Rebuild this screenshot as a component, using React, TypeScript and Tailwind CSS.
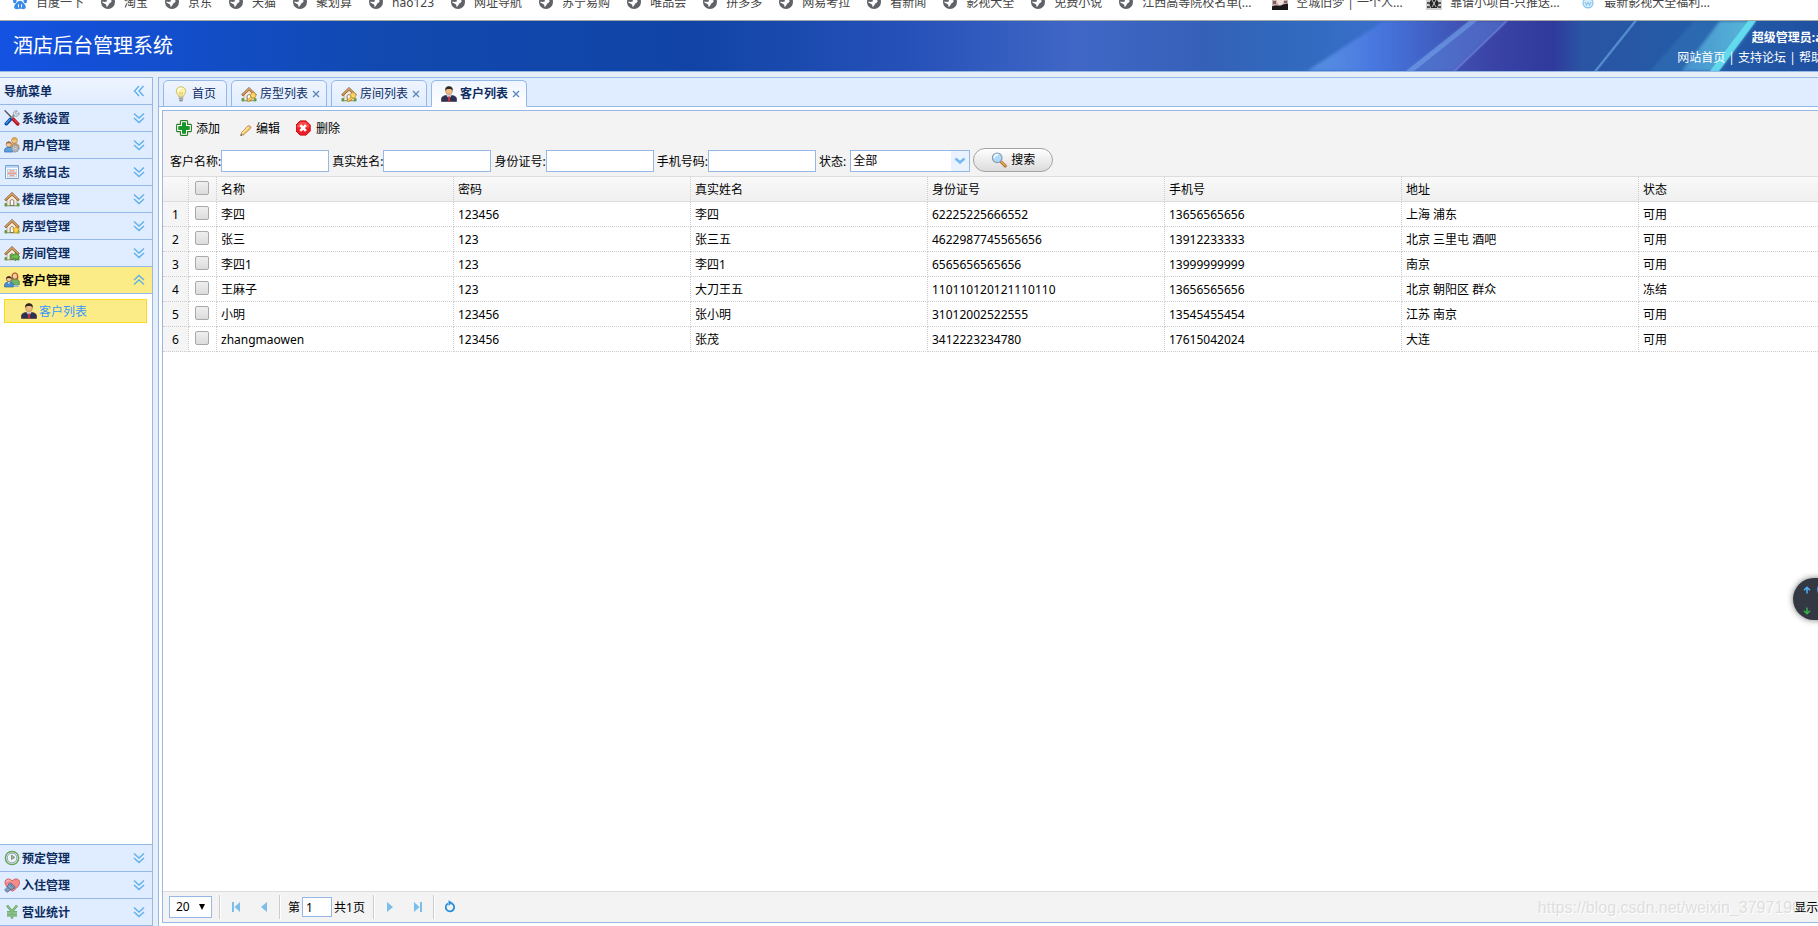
import { useState } from "react";
import type { ReactNode } from "react";

type Customer = {
  name: string;
  password: string;
  realName: string;
  idCard: string;
  mobile: string;
  address: string;
  status: string;
};

type IconName =
  | "tools"
  | "users"
  | "log"
  | "house"
  | "houseStar"
  | "houseGo"
  | "houseKey"
  | "customers"
  | "manager"
  | "clock"
  | "heart"
  | "yen"
  | "bulb"
  | "add"
  | "pencil"
  | "remove"
  | "search";

const bookmarks = [
  { label: "百度一下", icon: "baidu" },
  { label: "淘宝", icon: "globe" },
  { label: "京东", icon: "globe" },
  { label: "天猫", icon: "globe" },
  { label: "聚划算", icon: "globe" },
  { label: "hao123", icon: "globe" },
  { label: "网址导航", icon: "globe" },
  { label: "苏宁易购", icon: "globe" },
  { label: "唯品会", icon: "globe" },
  { label: "拼多多", icon: "globe" },
  { label: "网易考拉", icon: "globe" },
  { label: "看新闻", icon: "globe" },
  { label: "影视大全", icon: "globe" },
  { label: "免费小说", icon: "globe" },
  { label: "江西高等院校名单(...", icon: "globe" },
  { label: "空城旧梦 | 一个人...", icon: "photo" },
  { label: "靠谱小项目-只推送...", icon: "dark" },
  { label: "最新影视大全福利...", icon: "badge" },
];

const topMenus: { label: string; icon: IconName }[] = [
  { label: "系统设置", icon: "tools" },
  { label: "用户管理", icon: "users" },
  { label: "系统日志", icon: "log" },
  { label: "楼层管理", icon: "house" },
  { label: "房型管理", icon: "houseStar" },
  { label: "房间管理", icon: "houseGo" },
];

const bottomMenus: { label: string; icon: IconName }[] = [
  { label: "预定管理", icon: "clock" },
  { label: "入住管理", icon: "heart" },
  { label: "营业统计", icon: "yen" },
];

const tabs: { label: string; icon: IconName; closable: boolean }[] = [
  { label: "首页", icon: "bulb", closable: false },
  { label: "房型列表", icon: "houseKey", closable: true },
  { label: "房间列表", icon: "houseKey", closable: true },
  { label: "客户列表", icon: "manager", closable: true },
];

const columns = ["名称", "密码", "真实姓名", "身份证号", "手机号", "地址", "状态"];

const customers: Customer[] = [
  { name: "李四", password: "123456", realName: "李四", idCard: "62225225666552", mobile: "13656565656", address: "上海 浦东", status: "可用" },
  { name: "张三", password: "123", realName: "张三五", idCard: "4622987745565656", mobile: "13912233333", address: "北京 三里屯 酒吧", status: "可用" },
  { name: "李四1", password: "123", realName: "李四1", idCard: "6565656565656", mobile: "13999999999", address: "南京", status: "可用" },
  { name: "王麻子", password: "123", realName: "大刀王五", idCard: "110110120121110110", mobile: "13656565656", address: "北京 朝阳区 群众", status: "冻结" },
  { name: "小明", password: "123456", realName: "张小明", idCard: "31012002522555", mobile: "13545455454", address: "江苏 南京", status: "可用" },
  { name: "zhangmaowen", password: "123456", realName: "张茂", idCard: "3412223234780", mobile: "17615042024", address: "大连", status: "可用" },
];

const houseShape = (
  <>
    <path d="M1 13.5h14v1.8H1z" fill="#7db35a" />
    <path d="M0.5 12.5c1-1 2.500-.5 2.800.5v2.200H0.500zM12.700 13c.5-1.200 2-1.200 2.800-.4v2.600h-2.800z" fill="#5d9c3e" />
    <path d="M3 7.500 8 3l5 4.500v7H3z" fill="#f3ead9" stroke="#a08a6a" strokeWidth=".6" />
    <path d="M6.200 14.500v-4.200c0-1 .8-1.600 1.800-1.600s1.800.6 1.800 1.600v4.200z" fill="#fff" stroke="#6d675e" strokeWidth=".9" />
    <path d="M.6 8.600 8 1.400l7.400 7.200-1.300 1.300L8 4.300 1.900 9.900z" fill="#c98d4c" stroke="#7d4f22" strokeWidth=".7" strokeLinejoin="round" />
    <path d="M1.800 8.500 8 2.500l6.200 6" fill="none" stroke="#e7b97e" strokeWidth=".7" />
  </>
);

const iconShapes: Record<IconName, ReactNode> = {
  tools: (
    <>
      <path d="M1 .8 9 9" stroke="#4c5157" strokeWidth="1.300" strokeLinecap="round" />
      <path d="m8.800 8.800 5 5.200" stroke="#b3141d" strokeWidth="3.400" strokeLinecap="round" />
      <path d="m9.400 8.900 4.200 4.300" stroke="#ef5a5a" strokeWidth="1" strokeLinecap="round" />
      <path d="M6.500 8.700 11 4.200" stroke="#8b9299" strokeWidth="2.200" />
      <path d="M14.800 2.600 12.900 4.500l-1.500-1.500L13.300 1c-1.500-.7-3.700.2-3.800 2.300-.1 1.800 1.300 3.100 2.900 3 2-.1 3.200-2 2.400-3.700z" fill="#e3e7ea" stroke="#777e85" strokeWidth=".7" />
      <path d="m6.300 9.500-4 4.200" stroke="#124a9c" strokeWidth="3.600" strokeLinecap="round" />
      <path d="m5.600 9.600-3.400 3.600" stroke="#4b96ee" strokeWidth="1.300" strokeLinecap="round" />
    </>
  ),
  users: (
    <>
      <circle cx="10.500" cy="3.400" r="2.900" fill="#f2c48b" stroke="#a87331" strokeWidth=".6" />
      <path d="M7.500 3.300C7.600-.4 13.300-.4 13.500 3.300 12 2.100 9 2.100 7.500 3.300z" fill="#d9a441" />
      <path d="M6.500 12V9.500c0-2 1.500-3 4-3s4.500 1 4.500 3V12z" fill="#e5a554" stroke="#a66e29" strokeWidth=".6" />
      <circle cx="4.800" cy="7.300" r="2.600" fill="#f4cfa3" stroke="#a2693a" strokeWidth=".6" />
      <path d="M2 7.200C2.200 3.700 7.400 3.700 7.600 7.200 6.200 6 3.400 6 2 7.200z" fill="#a3683a" />
      <path d="M.6 15v-1.700c0-2 1.600-3 4.200-3s4.200 1 4.200 3V15z" fill="#5aa0e4" stroke="#2b65a8" strokeWidth=".7" />
      <circle cx="11.200" cy="11.300" r="3.400" fill="#d7d9da" stroke="#8d9296" strokeWidth="1.500" strokeDasharray="1.600 .8" />
      <circle cx="11.200" cy="11.300" r="2.700" fill="#d3d6d8" stroke="#8f9599" strokeWidth=".7" />
      <circle cx="11.200" cy="11.300" r="1.100" fill="#fff" stroke="#70767a" strokeWidth=".6" />
    </>
  ),
  log: (
    <>
      <path d="M1.500 1.500h13v13h-13z" fill="#fff" stroke="#78a3d2" />
      <path d="M2 2h12v1.800H2z" fill="#b7d3f0" />
      <path d="M3 5h10v8H3z" fill="#f0f4f8" />
      <path d="M3 5.500h10M3 8h10M3 10.500h10M3 13h10M3.500 5v8M6 5v8M10 5v8M12.500 5v8" stroke="#bcc8d6" strokeWidth=".8" />
      <path d="M6 6.300h4v1.200H6zM4 8.600h8v1.300H4zM6 11h4v1.200H6z" fill="#f29c90" />
    </>
  ),
  house: houseShape,
  houseStar: (
    <>
      {houseShape}
      <path d="m12 8.200 1.100 2.300 2.500.3-1.800 1.800.4 2.600-2.200-1.200-2.200 1.200.4-2.600-1.800-1.800 2.500-.3z" fill="#ffd94a" stroke="#d79a16" strokeWidth=".7" strokeLinejoin="round" />
    </>
  ),
  houseGo: (
    <>
      {houseShape}
      <path d="M6.800 9.800h4.400V7.600l4.400 4-4.400 4v-2.300H6.800z" fill="#6fc04e" stroke="#2f7d1d" strokeWidth=".8" strokeLinejoin="round" />
    </>
  ),
  houseKey: (
    <>
      {houseShape}
      <path d="m10.800 10-4.400 4 .3 1.500h1.800l.3-1.200h1.100l.4-1.200h1.100l1-1" fill="#ffd45c" stroke="#b8821b" strokeWidth=".7" strokeLinejoin="round" />
      <circle cx="12.300" cy="9.200" r="2.700" fill="#ffdc6b" stroke="#c18a1e" strokeWidth=".8" />
      <circle cx="13.100" cy="8.400" r=".8" fill="#fff" stroke="#b8821b" strokeWidth=".4" />
    </>
  ),
  customers: (
    <>
      <path d="M7.800 7.500C7 3 8.200.6 10.900.6s4 2.400 3.200 6.900z" fill="#b4572b" />
      <ellipse cx="10.900" cy="4.200" rx="2.100" ry="2.600" fill="#f6cda2" />
      <path d="M7 12.500V10c0-1.900 1.500-2.800 4-2.800s4.400.9 4.400 2.800v2.500z" fill="#74b266" stroke="#3c7436" strokeWidth=".6" />
      <circle cx="4.900" cy="7" r="2.600" fill="#f4caa0" stroke="#5b3a22" strokeWidth=".6" />
      <path d="M2.100 7C2.200 3.300 7.500 3.300 7.700 7 6.400 5.700 3.500 5.700 2.100 7z" fill="#40291b" />
      <path d="M.5 15v-1.800c0-2.100 1.600-3.100 4.400-3.100s4.500 1 4.500 3.100V15z" fill="#4c8fd0" stroke="#275a93" strokeWidth=".6" />
      <path d="m3.800 10.200 1.100 1.800 1.200-1.800z" fill="#fff" />
      <path d="M10 15c0-1.500.6-2.500 2-2.500s3 .8 3 2.500z" fill="#9bb7d4" />
    </>
  ),
  manager: (
    <>
      <path d="M.4 15.400v-2.200c0-2.700 2.700-4 7.600-4s7.600 1.300 7.600 4v2.200z" fill="#2e3152" stroke="#1a1c34" strokeWidth=".5" />
      <path d="M5.500 9.200 8 13l2.500-3.800z" fill="#fff" />
      <path d="M7.300 10.200h1.500l.6 5.200H6.700z" fill="#c03438" />
      <circle cx="8" cy="5" r="3.400" fill="#f1bd83" stroke="#9b6a37" strokeWidth=".5" />
      <path d="M4.300 5C3.700 1.700 5.500.2 8 .2s4.300 1.500 3.700 4.800C11.300 3.500 10.500 3 8 3s-3.300.5-3.700 2z" fill="#2f2722" />
    </>
  ),
  clock: (
    <>
      <circle cx="8" cy="8" r="6.600" fill="#fff" stroke="#68a35c" strokeWidth="1.500" />
      <circle cx="8" cy="8" r="4.900" fill="#eef4f8" stroke="#7890aa" strokeWidth=".9" />
      <path d="M7.500 5v4.600l3.400-2.100z" fill="#9cbd9c" stroke="#4f6b56" strokeWidth=".6" />
    </>
  ),
  heart: (
    <>
      <path d="M8.500 14.300C4.500 11.500 1 8.800 1 5.300 1 1.600 6 .7 8.200 4 10.500.7 15.600 1.600 15.600 5.300c0 3.500-3.100 6.200-7.100 9z" fill="#f58a8a" stroke="#cf4c50" strokeWidth=".8" />
      <path d="M2.600 5c.2-1.600 2-2.400 3.600-1.600" stroke="#ffd0cd" strokeWidth="1" fill="none" />
      <path d="M5.200 6.200c2.600.2 5 2 6 4.600l-4.400 1.900-3.700 2.500-2.400-2 2-2.300z" fill="#7fa0c4" stroke="#4a678b" strokeWidth=".8" strokeLinejoin="round" />
      <path d="m4 10.500 3 2.200M6 7.500l3.500 3" stroke="#4e6b8e" strokeWidth=".8" />
    </>
  ),
  yen: (
    <>
      <path d="M3 1.500 8 7.500l5-6M8 7.500v7M3 8.200h10M3 11.200h10" fill="none" stroke="#5d9a5b" strokeWidth="2.400" />
      <path d="M3 1.500 8 7.500l5-6M8 7.500v7M3 8.200h10M3 11.200h10" fill="none" stroke="#86c17f" strokeWidth="1.400" />
    </>
  ),
  bulb: (
    <>
      <path d="M8 .8C5 .8 3.300 2.900 3.300 5.200c0 2.600 2.200 3.600 2.400 5.600h4.600c.2-2 2.400-3 2.400-5.600C12.700 2.900 11 .8 8 .8z" fill="#fbf4a8" stroke="#c4b552" strokeWidth=".8" />
      <path d="M5.400 5.200C5.400 3.500 6.400 2.300 8 2.200" stroke="#fff" strokeWidth="1.200" fill="none" strokeLinecap="round" />
      <path d="M7 10.500 6.700 6.500l1.300.8 1.300-.8-.3 4" fill="none" stroke="#d3ab43" strokeWidth=".6" />
      <path d="M5.900 11h4.200v2.900l-1 1.500H6.900l-1-1.500z" fill="#8c8f92" />
      <path d="M5.900 11.700h4.200M5.900 13.300h4.200" stroke="#dadcde" strokeWidth=".7" />
    </>
  ),
  add: (
    <>
      <path d="M5 .6h6l.6.600v3.200h3.200l.6.600v6l-.6.600h-3.200v3.200l-.6.600H5l-.6-.6v-3.200H1.200L.6 11V5l.6-.6h3.200V1.200z" fill="#fff" stroke="#2c7d27" strokeWidth="1.100" />
      <path d="M6 2.300h4V6h3.700v4H10v3.700H6V10H2.300V6H6z" fill="#14962a" />
    </>
  ),
  pencil: (
    <g transform="translate(3 3) scale(.84)">
      <path d="M4.200 14.600 1.600 15.500l.7-2.800z" fill="#3d3226" />
      <path d="m2.400 12.300 7.900-8.700c.8-.6 2.300-.5 3.200.4.800.8.900 1.900.2 2.600l-8.900 8c-.4-1.100-1.200-2-2.400-2.300z" fill="#f8c766" stroke="#a9752c" strokeWidth=".8" />
      <path d="m3.600 12.300 8.200-8" stroke="#ffeab4" strokeWidth="1.300" />
      <path d="M10.300 3.600c1.300 0 2.800 1 3.200 3.200.9-.6.800-1.900-.1-2.800-.9-.9-2.300-1.100-3.100-.4z" fill="#e88f7c" />
    </g>
  ),
  remove: (
    <g transform="translate(-.9 0)">
      <path d="M5 .9h6L15.100 5v6L11 15.100H5L.9 11V5z" fill="#ee2027" stroke="#c90d14" strokeWidth="1" strokeLinejoin="round" />
      <path d="M5.200 2h5.600L14 5.200v2.300H2V5.200z" fill="#ff6a68" opacity=".6" />
      <path d="m5.200 5.200 5.600 5.600m0-5.600-5.600 5.600" stroke="#fff" strokeWidth="2.600" />
    </g>
  ),
  search: (
    <>
      <path d="m9.800 9.500 4.400 4.400" stroke="#a4682c" strokeWidth="3" strokeLinecap="round" />
      <path d="m10.300 9.800 3.700 3.700" stroke="#f2ab57" strokeWidth="1.500" strokeLinecap="round" />
      <circle cx="6.200" cy="5.800" r="4.800" fill="#aedcf8" stroke="#8c9bb3" strokeWidth="1.200" />
      <path d="M3.200 5.400C3.500 3.600 5 2.600 6.600 2.700" stroke="#fff" strokeWidth="1.500" fill="none" strokeLinecap="round" />
    </>
  ),
};

function Icon({ name }: { name: IconName }) {
  return (
    <svg viewBox="0 0 16 16" className="h-4 w-4 shrink-0" aria-hidden="true">
      {iconShapes[name]}
    </svg>
  );
}

function BookmarkIcon({ kind }: { kind: string }) {
  return (
    <svg viewBox="0 0 16 16" className="h-4 w-4 shrink-0" aria-hidden="true">
      {kind === "baidu" && (
        <g fill="#3b8bea">
          <ellipse cx="2.800" cy="7" rx="1.800" ry="2.400" />
          <ellipse cx="6" cy="3" rx="1.800" ry="2.500" />
          <ellipse cx="10.200" cy="3" rx="1.800" ry="2.500" />
          <ellipse cx="13.300" cy="7" rx="1.800" ry="2.400" />
          <path d="M8 6.800c2 0 2.700 1.800 4.300 3.200 2.600 2.300 1.500 5.200-1 5.200-1.400 0-2-.4-3.300-.4s-2 .4-3.400.4c-2.500 0-3.500-3-1-5.200C5.300 8.600 6 6.800 8 6.800z" />
          <path d="M6.500 10.400v3m3-3v3" stroke="#fff" />
        </g>
      )}
      {kind === "globe" && (
        <>
          <circle cx="8" cy="8" r="7" fill="#5f6368" />
          <path d="M3.500 3.500h4c0 2 .8 2.300 2.300 2.400 1.300 0 2 .5 1.700 1.500-.3.900-1 1.400-2 1.800L7.800 12c-.4.900-1 1-1.500.4.200-1 .1-1.700-.7-2.100L2.400 8.500v-1c1.300.4 2.600.6 3.600.3.900-.3 1.200-.8.700-1.500-.8-1-2.300-.7-3.200-2.800z" fill="#fff" />
        </>
      )}
      {kind === "photo" && (
        <>
          <path d="M0 0h16v16H0z" fill="#c9b2ad" />
          <path d="M0 12.500c4-2 6 0 9-1s4-2 7-1.500v6H0z" fill="#1c1718" />
          <path d="M5 4c2-3 7-2 7 2 0 3-2 5-4 5S4 7 5 4z" fill="#f1dfdc" />
          <path d="M1 7h3v3H1zM12 7h3v2h-3z" fill="#7f5d5e" />
        </>
      )}
      {kind === "dark" && (
        <>
          <path d="M0 0h16v16H0z" fill="#d0d0d0" />
          <path d="M4 2h8l-1 4 2 3-2 5H5L3 9l2-3z" fill="#272727" />
          <path d="m6 6 4 7m0-7-4 7" stroke="#e3e3e3" strokeWidth=".8" />
          <path d="M1 8h2v2H1zM13 8h2v2h-2zM1 12h3v2H1zM12 12h3v2h-3z" fill="#555" />
        </>
      )}
      {kind === "badge" && (
        <g fill="none" stroke="#8cc5ef" strokeWidth="1.200">
          <circle cx="8" cy="9" r="5" fill="#d9eefc" />
          <path d="m5 8 1.500 3L8 8.500l1.500 2.500L11 8M6 13.500h4" />
        </g>
      )}
    </svg>
  );
}

function DoubleChevron({ className }: { className: string }) {
  return (
    <svg viewBox="0 0 16 16" className={className} fill="none" stroke="#5fb0ea" strokeWidth="1.400" aria-hidden="true">
      <path d="m3 3.500 5 4.500 5-4.500M3 8l5 4.500L13 8" />
    </svg>
  );
}

function MenuHeader({ label, icon }: { label: string; icon: IconName }) {
  return (
    <button className="flex h-[27px] w-full shrink-0 items-center gap-[2px] border-b border-[#95b8e7] bg-[#e0ecff] pl-1 pr-[5px] text-left font-bold text-[#0e2d5f]">
      <Icon name={icon} />
      <span className="pt-[2px]">{label}</span>
      <DoubleChevron className="ml-auto h-4 w-4" />
    </button>
  );
}

function ToolButton({ label, icon }: { label: string; icon: IconName }) {
  return (
    <button className="flex items-center gap-1 px-2">
      <Icon name={icon} />
      <span className="pt-[2px]">{label}</span>
    </button>
  );
}

// light beams on the right side of the banner
function BannerArt() {
  return (
    <svg viewBox="1200 0 720 50" preserveAspectRatio="none" className="absolute inset-y-0 right-0 h-full w-[720px]" aria-hidden="true">
      <defs>
        <linearGradient id="base" x1="0" x2="1" y1="0" y2="0">
          <stop offset="0" stopColor="#3560b8" />
          <stop offset=".12" stopColor="#3069bd" />
          <stop offset=".25" stopColor="#3a6fca" />
          <stop offset=".36" stopColor="#3f4fb0" />
          <stop offset=".41" stopColor="#3a42a6" />
          <stop offset=".49" stopColor="#2f3a9c" />
          <stop offset=".53" stopColor="#2a54a4" />
          <stop offset=".7" stopColor="#235ca8" />
          <stop offset="1" stopColor="#1d479d" />
        </linearGradient>
        <linearGradient id="beam" x1="0" x2="1" y1="0" y2="0">
          <stop offset="0" stopColor="#6aa4f4" stopOpacity=".6" />
          <stop offset=".4" stopColor="#4a78e2" stopOpacity=".9" />
          <stop offset="1" stopColor="#4158c4" stopOpacity="0" />
        </linearGradient>
        <linearGradient id="cyan" x1="0" x2="1" y1="0" y2="0">
          <stop offset="0" stopColor="#4fa0d8" stopOpacity=".8" />
          <stop offset="1" stopColor="#5cc0dc" stopOpacity=".95" />
        </linearGradient>
        <filter id="soft">
          <feGaussianBlur stdDeviation="1.500" />
        </filter>
      </defs>
      <path d="M1200 0h720v50h-720z" fill="url(#base)" />
      <g filter="url(#soft)">
        <path d="M1307 50 1384 0h92l-63 50z" fill="url(#beam)" />
        <path d="m1406 50 63-50h38l-53 50z" fill="#5b86dc" opacity=".5" />
        <path d="m1650 50 44-50h26l-37 50z" fill="#2f76b8" opacity=".5" />
        <path d="m1682 50 38-50h36l-37 50z" fill="url(#cyan)" />
      </g>
      <path d="m1406 50 63-50h8l-63 50z" fill="#7fb0f0" opacity=".45" />
      <path d="m1453 50 52-50h3l-52 50z" fill="#7d8ee0" opacity=".5" />
      <path d="m1594 50 40-50h3l-40 50z" fill="#6fb0e6" opacity=".6" />
      <path d="m1710 50 38-50h8l-37 50z" fill="#66e6f2" opacity=".8" />
    </svg>
  );
}

function PagerButton({ label, children }: { label: string; children: ReactNode }) {
  return (
    <button aria-label={label} className="flex h-6 w-7 items-center justify-center">
      <svg viewBox="0 0 16 16" className="h-4 w-4" fill="#7cbdea" aria-hidden="true">
        {children}
      </svg>
    </button>
  );
}

function Separator() {
  return <div className="mx-px h-6 w-[2px] border-l border-r border-l-[#ccc] border-r-white" />;
}

function SearchField({ id, label }: { id: string; label: string }) {
  return (
    <div className="flex h-[22px]">
      <label htmlFor={id}>{label}:</label>
      <input id={id} className="h-full w-[108px] border border-[#95b8e7] bg-white px-1 outline-none" />
    </div>
  );
}

const checkboxClass =
  "block h-[14px] w-[14px] appearance-none rounded-[2px] border border-[#a9a9a9] bg-linear-to-b from-[#efefef] to-[#dcdcdc] checked:bg-blue-400";

function App() {
  const [activeTab, setActiveTab] = useState(3);
  const [selected, setSelected] = useState<number[]>([]);

  const toggleRow = (index: number) => {
    setSelected((rows) =>
      rows.includes(index) ? rows.filter((r) => r !== index) : [...rows, index]
    );
  };

  const toggleAll = () => {
    setSelected(selected.length === customers.length ? [] : customers.map((_, i) => i));
  };

  return (
    <div className="relative h-screen overflow-hidden bg-white font-['Noto_Sans','Noto_Sans_CJK_SC',sans-serif] text-xs text-black">
      <div className="flex h-full min-w-[1920px] flex-col">
        <nav className="h-[21px] shrink-0 overflow-hidden border-b border-[#a9a9a4]">
          <div className="-mt-[6px] flex h-4 items-center gap-4 pl-3 text-[#444]">
            {bookmarks.map((item) => (
              <a
                key={item.label}
                href="#"
                className={
                  item.label.endsWith("...")
                    ? "flex w-[138px] items-center gap-2 leading-4 whitespace-nowrap"
                    : "flex items-center gap-2 leading-4 whitespace-nowrap"
                }
              >
                <BookmarkIcon kind={item.icon} />
                <span className="pt-[2px]">{item.label}</span>
              </a>
            ))}
          </div>
        </nav>

        <header className="relative flex h-[51px] shrink-0 items-center justify-between border-b border-[#95b8e7] bg-[linear-gradient(to_right,#1452e2,#1149b0_20%,#1144a6_36%,#2550b8_47%,#4067c6_56%,#3560b8_63%)] pl-[13px] pr-[67px] text-white">
          <BannerArt />
          <h1 className="relative text-xl">酒店后台管理系统</h1>
          <div className="relative flex flex-col items-end pt-[3px] leading-5">
            <strong>超级管理员:admin</strong>
            <div className="pr-[6px]">
              <a href="#">网站首页</a> | <a href="#">支持论坛</a> | <a href="#">帮助中心</a>
            </div>
          </div>
        </header>

        <div className="flex min-h-0 flex-1 gap-[5px] bg-[#e6eef8] pt-[5px]">
          <aside className="flex w-[153px] shrink-0 flex-col border-t border-r border-[#95b8e7] bg-white">
            <div className="flex h-[27px] shrink-0 items-center justify-between border-b border-[#95b8e7] bg-linear-to-b from-[#eff5ff] to-[#e0ecff] pl-1 pr-[5px] font-bold text-[#0e2d5f]">
              <span className="pt-[2px]">导航菜单</span>
              <button aria-label="折叠">
                <DoubleChevron className="block h-4 w-4 rotate-90" />
              </button>
            </div>
            {topMenus.map((menu) => (
              <MenuHeader key={menu.label} {...menu} />
            ))}
            <button className="flex h-[27px] w-full shrink-0 items-center gap-[2px] border-b border-[#95b8e7] bg-[#fbec88] pl-1 pr-[5px] text-left font-bold">
              <Icon name="customers" />
              <span className="pt-[2px]">客户管理</span>
              <DoubleChevron className="ml-auto h-4 w-4 rotate-180" />
            </button>
            <div className="flex-1 border-b border-[#95b8e7] py-[5px] pl-1 pr-[5px]">
              <a href="#" className="flex h-6 items-center gap-[2px] border border-[#fbdc1c] bg-[#fbec88] pl-4 text-[#3399ff]">
                <Icon name="manager" />
                <span className="pt-[2px]">客户列表</span>
              </a>
            </div>
            {bottomMenus.map((menu) => (
              <MenuHeader key={menu.label} {...menu} />
            ))}
          </aside>

          <main className="flex min-w-0 flex-1 flex-col border-t border-l border-[#95b8e7] bg-white">
            <div className="flex h-[29px] shrink-0 gap-1 border-b border-[#95b8e7] bg-[#e0ecff] pt-[2px] pl-1">
              {tabs.map((tab, index) => (
                <div
                  key={tab.label}
                  className={
                    index === activeTab
                      ? "-mb-px flex items-center rounded-t-[5px] border border-[#95b8e7] border-b-white bg-linear-to-b from-[#eff5ff] to-white pl-[9px] font-bold text-[#0e2d5f]"
                      : "-mb-px flex items-center rounded-t-[5px] border border-[#95b8e7] bg-linear-to-b from-[#eff5ff] to-[#e0ecff] pl-[9px] text-[#0e2d5f]"
                  }
                >
                  <button onClick={() => setActiveTab(index)} className="flex items-center gap-[3px]">
                    <Icon name={tab.icon} />
                    {tab.label}
                  </button>
                  {tab.closable ? (
                    <button aria-label={"关闭" + tab.label} className="mr-[2px] flex w-4 justify-center">
                      <svg viewBox="0 0 8 8" className="h-2 w-2" stroke="#5b84b8" strokeWidth="1.300" aria-hidden="true">
                        <path d="m1 1 6 6M7 1 1 7" />
                      </svg>
                    </button>
                  ) : (
                    <span className="w-[10px]" />
                  )}
                </div>
              ))}
            </div>

            <div className="flex min-h-0 flex-1 p-[3px]">
              <section className="flex min-w-0 flex-1 flex-col border border-[#95b8e7]">
                <div className="shrink-0 border-b border-[#ddd] bg-[#f3f3f3]">
                  <div className="flex h-[34px] items-center pl-[5px]">
                    <ToolButton label="添加" icon="add" />
                    <ToolButton label="编辑" icon="pencil" />
                    <ToolButton label="删除" icon="remove" />
                  </div>
                  <form className="flex h-[31px] items-end gap-[3px] pb-1 pl-[7px] leading-6">
                    <SearchField id="name" label="客户名称" />
                    <SearchField id="realName" label="真实姓名" />
                    <SearchField id="idCard" label="身份证号" />
                    <SearchField id="mobile" label="手机号码" />
                    <div className="flex h-[22px] gap-1">
                      <label htmlFor="status">状态:</label>
                      <div className="relative h-full w-[120px]">
                        <select id="status" className="block h-full w-full appearance-none border border-[#95b8e7] bg-white pl-[2px] leading-5 outline-none">
                          <option>全部</option>
                          <option>可用</option>
                          <option>冻结</option>
                        </select>
                        <span className="pointer-events-none absolute inset-y-px right-px flex w-[18px] items-center justify-center bg-[#eaf2ff]">
                          <svg viewBox="0 0 12 8" className="h-2 w-3" fill="none" stroke="#6db9ee" strokeWidth="2.400" aria-hidden="true">
                            <path d="m1.500 1.500 4.500 4 4.500-4" />
                          </svg>
                        </span>
                      </div>
                    </div>
                    <button type="button" className="flex h-6 w-20 items-center justify-center gap-1 rounded-full border border-[#a3a3a3] bg-linear-to-b from-white to-[#dcdcdc]">
                      <Icon name="search" />
                      搜索
                    </button>
                  </form>
                </div>

                <div className="min-h-0 flex-1 overflow-hidden">
                  <table className="w-[1713px] table-fixed border-separate border-spacing-0">
                    <thead>
                      <tr className="h-[25px] bg-linear-to-b from-[#f9f9f9] to-[#efefef]">
                        <th className="w-[26px] border-r border-b border-r-[#ccc] border-b-[#ddd] p-0 [border-right-style:dotted]" />
                        <th className="w-[28px] border-r border-b border-r-[#ccc] border-b-[#ddd] pt-0 pr-0 pb-[2px] pl-[6px] [border-right-style:dotted]">
                          <input
                            type="checkbox"
                            aria-label="全选"
                            className={checkboxClass}
                            checked={selected.length === customers.length}
                            onChange={toggleAll}
                          />
                        </th>
                        {columns.map((column) => (
                          <th key={column} className="border-r border-b border-r-[#ccc] border-b-[#ddd] px-1 pt-[2px] pb-0 text-left font-normal [border-right-style:dotted]">
                            {column}
                          </th>
                        ))}
                      </tr>
                    </thead>
                    <tbody>
                      {customers.map((row, index) => (
                        <tr key={row.name} className="h-[25px]">
                          <td className="border-r border-b border-dotted border-[#ccc] bg-[#f5f5f5] px-0 pt-[2px] pb-0 text-center">
                            {index + 1}
                          </td>
                          <td className="border-r border-b border-dotted border-[#ccc] pt-0 pr-0 pb-[2px] pl-[6px]">
                            <input
                              type="checkbox"
                              aria-label={row.name}
                              className={checkboxClass}
                              checked={selected.includes(index)}
                              onChange={() => toggleRow(index)}
                            />
                          </td>
                          {Object.entries(row).map(([key, value]) => (
                            <td key={key} className="border-r border-b border-dotted border-[#ccc] px-1 pt-[2px] pb-0">
                              {value}
                            </td>
                          ))}
                        </tr>
                      ))}
                    </tbody>
                  </table>
                </div>

                <div className="flex h-[31px] shrink-0 items-center border-t border-[#ddd] bg-[#f3f3f3] pl-[6px]">
                  <div className="relative mr-[6px] h-[22px] w-[43px]">
                    <select aria-label="每页条数" className="block h-full w-full appearance-none border border-[#95b8e7] bg-white pl-[6px] leading-5">
                      <option>20</option>
                      <option>50</option>
                    </select>
                    <svg viewBox="0 0 6 6" className="pointer-events-none absolute top-2 right-[7px] h-[6px] w-[6px]" aria-hidden="true">
                      <path d="M0 0h6L3 6z" />
                    </svg>
                  </div>
                  <Separator />
                  <PagerButton label="首页">
                    <path d="M4 3h2v10H4zM12 3v10L6.500 8z" />
                  </PagerButton>
                  <PagerButton label="上一页">
                    <path d="M11 3v10L5 8z" />
                  </PagerButton>
                  <Separator />
                  <div className="flex w-[90px] items-center gap-[2px] pl-[6px]">
                    <label htmlFor="page" className="pt-[2px]">第</label>
                    <input id="page" defaultValue="1" className="h-5 w-[30px] border border-[#95b8e7] bg-white px-[3px] outline-none" />
                    <span className="pt-[2px]">共1页</span>
                  </div>
                  <Separator />
                  <PagerButton label="下一页">
                    <path d="M5 3v10l6-5z" />
                  </PagerButton>
                  <PagerButton label="末页">
                    <path d="M10 3h2v10h-2zM4 3v10l5.500-5z" />
                  </PagerButton>
                  <Separator />
                  <PagerButton label="刷新">
                    <path d="M9.500 4.300A4.200 4.200 0 1 1 6 4.500" fill="none" stroke="#2a8fdc" strokeWidth="1.800" />
                    <path d="m6.500 1.200 4.200 2.600-4.200 3z" fill="#2a8fdc" />
                  </PagerButton>
                  <span className="relative z-10 ml-auto pt-[2px] pr-[26px]">显示1到6,共6记录</span>
                </div>
              </section>
            </div>
          </main>
        </div>
      </div>

      <p className="pointer-events-none absolute right-2 bottom-[6px] font-['Liberation_Sans',sans-serif] text-base text-[#dedede] [text-shadow:1px_1px_0_#fff]">
        https://blog.csdn.net/weixin_37971908
      </p>

      {/* network speed widget docked on the right edge */}
      <div className="absolute top-[578px] -right-[35px] flex h-[42px] w-[60px] flex-col justify-around rounded-full bg-[#333842] pl-[10px] text-white shadow-[0_0_6px_#777]">
        <div className="flex items-center gap-[6px]">
          <svg viewBox="0 0 8 8" className="h-2 w-2" fill="none" stroke="#4db2f5" strokeWidth="1.500" aria-hidden="true">
            <path d="M4 7.500V1.500M1 4.200l3-3 3 3" />
          </svg>
          <span className="leading-3">0K/s</span>
        </div>
        <svg viewBox="0 0 8 8" className="h-2 w-2" fill="none" stroke="#37b24a" strokeWidth="1.500" aria-hidden="true">
          <path d="M4 .5v6M1 3.800l3 3 3-3" />
        </svg>
      </div>
    </div>
  );
}

export default App;
